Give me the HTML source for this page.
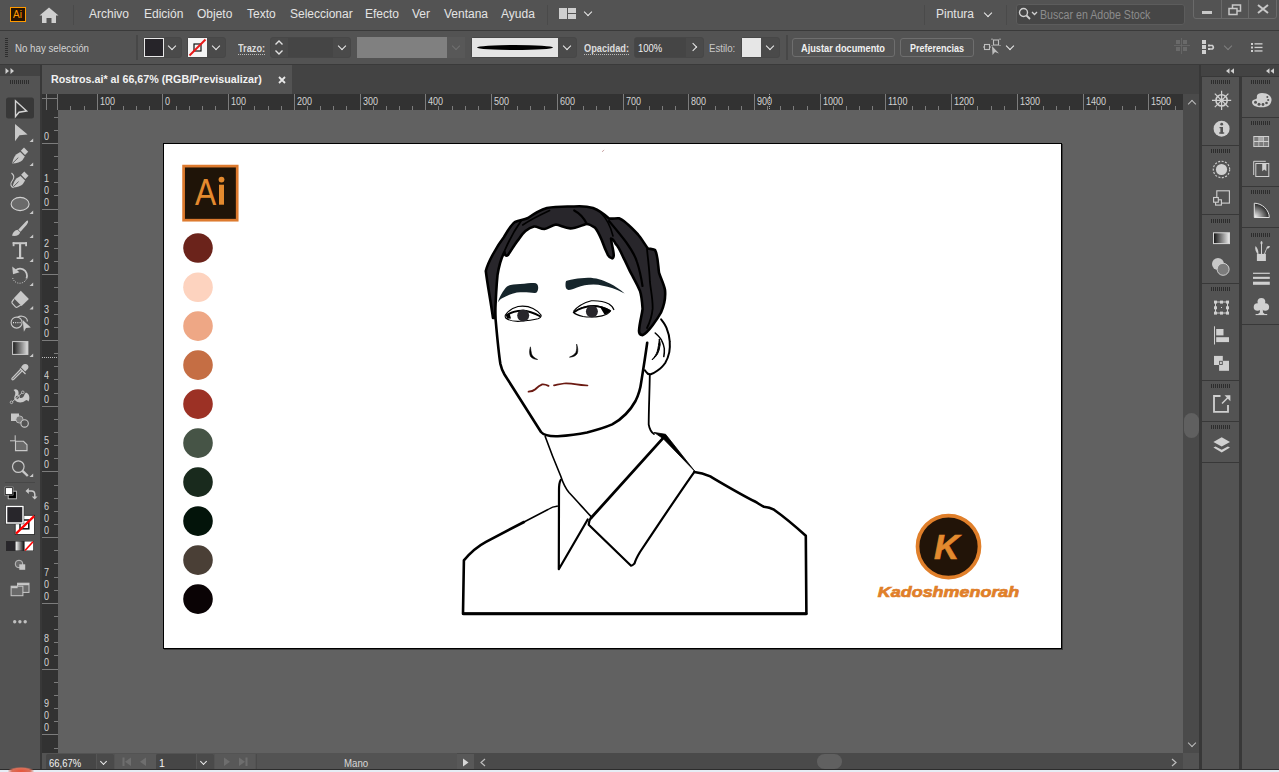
<!DOCTYPE html>
<html><head><meta charset="utf-8">
<style>
*{box-sizing:border-box;margin:0;padding:0}
html,body{width:1279px;height:772px;overflow:hidden;background:#383838;font-family:"Liberation Sans",sans-serif;color:#d8d8d8}
.a{position:absolute}
.menu{left:0;top:0;width:1279px;height:30px;background:#535353}
.mi{position:absolute;top:7px;font-size:12px;color:#e4e4e4;white-space:nowrap;line-height:14px}
.ctrl{left:0;top:31px;width:1279px;height:33px;background:#535353}
.t11{font-size:11px;line-height:13px;white-space:nowrap}
.dd{position:absolute;background:#4a4a4a;border:1px solid #474747;border-radius:3px}
.chev{position:absolute;width:6px;height:6px;border-right:1.9px solid #ececec;border-bottom:1.9px solid #ececec;transform:rotate(45deg)}
.sep{position:absolute;width:1px;background:#4a4a4a}
.btn{position:absolute;border:1px solid #6e6e6e;border-radius:3px;font-size:11px;font-weight:bold;color:#f0f0f0;text-align:center;line-height:17px;white-space:nowrap}
.rn{position:absolute;font-size:8px;line-height:8px;color:#d6d6d6;font-family:"Liberation Mono",monospace}
.rl{position:absolute;font-size:10.5px;line-height:9px;color:#d4d4d4;white-space:nowrap;transform:scaleX(0.86);transform-origin:0 0}
.grip{position:absolute;height:4px;background:repeating-linear-gradient(90deg,#2e2e2e 0 1px,transparent 1px 2px)}
</style></head><body>

<!-- MENU BAR -->
<div class="a menu"></div>
<div class="a" style="left:0;top:30px;width:1279px;height:1px;background:#3a3a3a"></div>
<!-- Ai logo -->
<div class="a" style="left:10px;top:7px;width:16px;height:15px;background:#261300;border:1.2px solid #ff9a00"></div>
<div class="a" style="left:12.5px;top:9px;font-size:10.5px;color:#ff9a00;line-height:11px;transform:scaleX(0.95);transform-origin:0 0">Ai</div>
<!-- home -->
<svg class="a" style="left:38px;top:6px" width="22" height="18" viewBox="0 0 22 18"><path d="M11 1.5 L1.5 9.5 L4 9.5 L4 17 L8.5 17 L8.5 12 L13.5 12 L13.5 17 L18 17 L18 9.5 L20.5 9.5 Z" fill="#cfcfcf"/></svg>
<div class="sep" style="left:73px;top:5px;height:20px"></div>
<div class="mi" style="left:89px">Archivo</div>
<div class="mi" style="left:144px">Edición</div>
<div class="mi" style="left:197px">Objeto</div>
<div class="mi" style="left:247px">Texto</div>
<div class="mi" style="left:290px">Seleccionar</div>
<div class="mi" style="left:365px">Efecto</div>
<div class="mi" style="left:412px">Ver</div>
<div class="mi" style="left:444px">Ventana</div>
<div class="mi" style="left:501px">Ayuda</div>
<div class="sep" style="left:547px;top:5px;height:20px"></div>
<!-- workspace icon -->
<div class="a" style="left:559px;top:8px;width:8px;height:11px;background:#cfcfcf"></div>
<div class="a" style="left:568px;top:8px;width:8px;height:5px;background:#cfcfcf"></div>
<div class="a" style="left:568px;top:14px;width:8px;height:5px;background:#cfcfcf"></div>
<div class="chev" style="left:585px;top:9px"></div>

<div class="sep" style="left:924px;top:5px;height:20px"></div>
<div class="mi" style="left:936px">Pintura</div>
<div class="chev" style="left:985px;top:10px"></div>
<div class="sep" style="left:1006px;top:5px;height:20px"></div>
<!-- search -->
<div class="a" style="left:1016px;top:4px;width:169px;height:21px;background:#464646;border:1px solid #5c5c5c;border-radius:3px"></div>
<svg class="a" style="left:1018px;top:7px" width="22" height="15" viewBox="0 0 22 15"><circle cx="5.5" cy="5.5" r="4" fill="none" stroke="#d0d0d0" stroke-width="1.4"/><path d="M8.5 8.5 L12 12" stroke="#d0d0d0" stroke-width="1.8"/><path d="M14 5 L16.5 7.5 L19 5" fill="none" stroke="#d0d0d0" stroke-width="1.3"/></svg>
<div class="mi" style="left:1040px;top:8px;color:#8c8c8c;transform:scaleX(0.885);transform-origin:0 0">Buscar en Adobe Stock</div>
<!-- window controls -->
<div class="a" style="left:1193px;top:-3px;width:84px;height:22px;border:1px solid #6a6a6a;border-radius:3px"></div>
<div class="a" style="left:1221px;top:0;width:1px;height:18px;background:#6a6a6a"></div>
<div class="a" style="left:1248px;top:0;width:1px;height:18px;background:#6a6a6a"></div>
<div class="a" style="left:1202px;top:11px;width:10px;height:3px;background:#c8c8c8"></div>
<svg class="a" style="left:1228px;top:4px" width="14" height="12" viewBox="0 0 14 12"><rect x="4.5" y="1" width="8" height="6" fill="none" stroke="#c8c8c8" stroke-width="1.5"/><rect x="1" y="4.5" width="8" height="6" fill="#535353" stroke="#c8c8c8" stroke-width="1.5"/></svg>
<svg class="a" style="left:1257px;top:4px" width="12" height="10" viewBox="0 0 12 10"><path d="M1 1 L11 9 M11 1 L1 9" stroke="#c8c8c8" stroke-width="2"/></svg>

<!-- CONTROL BAR -->
<div class="a ctrl"></div>
<div class="a" style="left:0;top:64px;width:1279px;height:1px;background:#3a3a3a"></div>
<div class="a" style="left:5px;top:38px;width:3px;height:19px;background:repeating-linear-gradient(180deg,#2e2e2e 0 1px,transparent 1px 2px)"></div>
<div class="a t11" style="left:15px;top:42px;color:#d4d4d4;font-size:10.5px;transform:scaleX(0.925);transform-origin:0 0">No hay selección</div>
<div class="sep" style="left:136px;top:35px;height:25px;background:#474747;width:2px"></div>
<!-- fill -->
<div class="dd" style="left:143px;top:37px;width:39px;height:21px"></div>
<div class="a" style="left:144px;top:38px;width:20px;height:19px;background:#262429;border:1px solid #e8e8e8"></div>
<div class="chev" style="left:169px;top:43px"></div>
<!-- stroke -->
<div class="dd" style="left:187px;top:37px;width:39px;height:21px"></div>
<svg class="a" style="left:188px;top:38px" width="19" height="19" viewBox="0 0 19 19"><rect width="19" height="19" fill="#f4f4f4"/><rect x="6" y="6" width="7" height="7" fill="none" stroke="#111" stroke-width="1.2"/><path d="M1.5 17.5 L17.5 1.5" stroke="#e81818" stroke-width="2"/></svg>
<div class="chev" style="left:213px;top:43px"></div>
<div class="a t11" style="left:238px;top:42px;font-weight:bold;color:#dcdcdc;font-size:10.5px;transform:scaleX(0.875);transform-origin:0 0">Trazo:</div>
<div class="a" style="left:238px;top:54px;width:27px;height:1px;background:repeating-linear-gradient(90deg,#bbb 0 1px,transparent 1px 2px)"></div>
<div class="dd" style="left:270px;top:37px;width:81px;height:21px"></div>
<div class="a" style="left:288px;top:38px;width:45px;height:19px;background:#454545"></div>
<svg class="a" style="left:274px;top:39px" width="10" height="17" viewBox="0 0 10 17"><path d="M1.5 5.5 L5 2 L8.5 5.5 M1.5 11.5 L5 15 L8.5 11.5" fill="none" stroke="#e0e0e0" stroke-width="1.4"/></svg>
<div class="chev" style="left:339px;top:43px"></div>
<!-- disabled -->
<div class="a" style="left:357px;top:37px;width:90px;height:21px;background:#808080"></div>
<div class="a" style="left:447px;top:37px;width:18px;height:21px;background:#585858"></div>
<div class="chev" style="left:453px;top:43px;border-color:#707070"></div>
<!-- profile -->
<div class="dd" style="left:471px;top:37px;width:106px;height:21px"></div>
<div class="a" style="left:472px;top:38px;width:86px;height:19px;background:#e4e4e4"></div>
<div class="a" style="left:477px;top:45px;width:76px;height:5px;background:#000;border-radius:50%"></div>
<div class="chev" style="left:564px;top:43px"></div>
<div class="a t11" style="left:584px;top:42px;font-weight:bold;color:#dcdcdc;font-size:10.5px;transform:scaleX(0.877);transform-origin:0 0">Opacidad:</div>
<div class="a" style="left:584px;top:54px;width:45px;height:1px;background:repeating-linear-gradient(90deg,#bbb 0 1px,transparent 1px 2px)"></div>
<div class="dd" style="left:634px;top:37px;width:70px;height:21px"></div>
<div class="a" style="left:635px;top:38px;width:51px;height:19px;background:#454545"></div>
<div class="a t11" style="left:638px;top:42px;color:#f0f0f0;font-size:10.5px;transform:scaleX(0.9);transform-origin:0 0">100%</div>
<div class="chev" style="left:690px;top:44px;transform:rotate(-45deg)"></div>
<div class="a t11" style="left:709px;top:42px;color:#c8c8c8;font-size:10.5px;transform:scaleX(0.92);transform-origin:0 0">Estilo:</div>
<div class="dd" style="left:741px;top:37px;width:39px;height:21px"></div>
<div class="a" style="left:742px;top:38px;width:19px;height:19px;background:#e6e6e6"></div>
<div class="chev" style="left:767px;top:43px"></div>
<div class="sep" style="left:786px;top:35px;height:25px;background:#474747;width:2px"></div>
<div class="btn" style="left:792px;top:38px;width:103px;height:19px"></div><div class="a t11" style="left:801px;top:42px;font-weight:bold;color:#f0f0f0;font-size:10.5px;transform:scaleX(0.878);transform-origin:0 0">Ajustar documento</div>
<div class="btn" style="left:900px;top:38px;width:74px;height:19px"></div><div class="a t11" style="left:910px;top:42px;font-weight:bold;color:#f0f0f0;font-size:10.5px;transform:scaleX(0.856);transform-origin:0 0">Preferencias</div>
<svg class="a" style="left:983px;top:38px" width="20" height="18" viewBox="0 0 20 18"><rect x="1.5" y="6.5" width="5" height="5" fill="none" stroke="#bdbdbd" stroke-width="1.1"/><path d="M0 9 H1.5 M6.5 9 H8" stroke="#bdbdbd" stroke-width="1"/><rect x="10.5" y="2" width="5" height="5" fill="none" stroke="#bdbdbd" stroke-width="1.1"/><path d="M9 0.5 V2 M17 0.5 V2 M9 7 V8 M17 7 V8" stroke="#bdbdbd" stroke-width="1"/><path d="M9 8 L9.5 17 L12 14 L16 15.5 Z" fill="#bdbdbd"/></svg>
<div class="chev" style="left:1007px;top:43px"></div>
<!-- right icons -->
<svg class="a" style="left:1174px;top:38px" width="16" height="16" viewBox="0 0 16 16"><g fill="#6a6a6a"><rect x="2" y="2" width="4" height="4"/><rect x="9" y="2" width="4" height="4"/><rect x="2" y="9" width="4" height="4"/><rect x="9" y="9" width="4" height="4"/></g><path d="M0 7.5 H16 M7.5 0 V16" stroke="#6a6a6a" stroke-width="0.8"/></svg>
<svg class="a" style="left:1201px;top:39px" width="16" height="16" viewBox="0 0 16 16"><g fill="#d0d0d0"><rect x="1" y="1" width="4" height="4"/><rect x="1" y="6" width="4" height="4"/><rect x="1" y="11" width="4" height="4"/><rect x="7" y="5.5" width="2" height="2"/><rect x="7" y="9" width="2" height="2"/></g><path d="M9 6.5 H11.5 A2.5 2.5 0 0 1 11.5 10 H9" fill="none" stroke="#d0d0d0" stroke-width="1.6"/></svg>
<div class="chev" style="left:1225px;top:43px;border-color:#808080"></div>
<svg class="a" style="left:1250px;top:42px" width="14" height="11" viewBox="0 0 14 11"><g fill="#d0d0d0"><rect x="1" y="1" width="2" height="2"/><rect x="1" y="4.5" width="2" height="2"/><rect x="1" y="8" width="2" height="2"/><rect x="4.5" y="1.2" width="8" height="1.3"/><rect x="4.5" y="4.8" width="8" height="1.3"/><rect x="4.5" y="8.3" width="8" height="1.3"/></g></svg>

<!-- LEFT TOOLBAR -->
<div class="a" style="left:0;top:65px;width:40px;height:705px;background:#535353"></div>
<div class="a" style="left:0;top:65px;width:40px;height:11px;background:#434343"></div>
<div class="a" style="left:40px;top:65px;width:2px;height:705px;background:#383838"></div>

<!-- TOOLBAR ICONS -->
<div class="a" style="left:10px;top:80px;width:19px;height:4px;background:repeating-linear-gradient(90deg,#2c2c2c 0 1px,transparent 1px 2px)"></div>
<svg class="a" style="left:4px;top:67px" width="12" height="8" viewBox="0 0 12 8"><path d="M1.5 1 L5 4 L1.5 7 Z M6.5 1 L10 4 L6.5 7 Z" fill="#cfcfcf"/></svg>
<svg class="a" style="left:0;top:0" width="42" height="772" viewBox="0 0 42 772">
<rect x="6" y="97.5" width="28" height="21" rx="2.5" fill="#383838"/>
<path d="M15.5 100.8 L15.5 116.5 L19 112.2 L26.6 111 Z" fill="none" stroke="#d4d4d4" stroke-width="1.4" stroke-linejoin="miter"/>
<path d="M15 124 L15 141.3 L19.5 135.3 L27.6 134.5 Z" fill="#c8c8c8"/>
<g fill="#c8c8c8">
<path d="M29.5 142 L33.2 138.6 L33.2 142 Z"/>
<path d="M29.5 166 L33.2 162.6 L33.2 166 Z"/>
<path d="M29.5 214 L33.2 210.6 L33.2 214 Z"/>
<path d="M29.5 238 L33.2 234.6 L33.2 238 Z"/>
<path d="M29.5 262 L33.2 258.6 L33.2 262 Z"/>
<path d="M29.5 286 L33.2 282.6 L33.2 286 Z"/>
<path d="M29.5 309.5 L33.2 306.1 L33.2 309.5 Z"/>
<path d="M29.5 357 L33.2 353.6 L33.2 357 Z"/>
<path d="M29.5 477 L33.2 473.6 L33.2 477 Z"/>
</g>
<!-- pen -->
<g fill="#c8c8c8">
<path d="M12.2 163.5 C13 159, 14.5 156, 16.5 154.3 L20.2 152 L24.8 156.5 L22.4 160.2 C20.5 162.2, 17 163.4, 12.2 163.5 Z"/>
<path d="M20.8 150.8 L24 147.6 L28.2 151.8 L25 155 Z"/>
<path d="M12.5 187.5 C13.3 183, 14.8 180, 16.8 178.3 L20.5 176 L25.1 180.5 L22.7 184.2 C20.8 186.2, 17.3 187.4, 12.5 187.5 Z"/>
<path d="M21.1 174.8 L24.3 171.6 L28.5 175.8 L25.3 179 Z"/>
</g>
<path d="M12.8 163 L18.3 157.6" stroke="#535353" stroke-width="0.9"/>
<path d="M13.1 187 L18.6 181.6" stroke="#535353" stroke-width="0.9"/>
<path d="M11.5 173 C14.5 175.5, 14.5 178.5, 11.8 181.5 C9.8 184, 11 187, 13.5 187.8" fill="none" stroke="#c8c8c8" stroke-width="1.1"/>
<!-- ellipse -->
<ellipse cx="20.1" cy="204" rx="9" ry="6.6" fill="#6a6a6a" stroke="#d0d0d0" stroke-width="1.1"/>
<!-- brush -->
<path d="M27.8 220.5 C28.5 221.5, 28 223, 26.5 225 L20.5 231.8 L18.2 229.8 L25 222.5 C26.3 221, 27.2 220.2, 27.8 220.5 Z" fill="#c8c8c8"/>
<path d="M12 235.8 C12.5 233, 14.3 230.3, 17.5 229.8 L20.2 232.3 C19.6 235.2, 16.5 236.3, 12 235.8 Z" fill="#c8c8c8"/>
<!-- type -->
<g fill="#c8c8c8"><rect x="12.7" y="242.2" width="14.3" height="2"/><rect x="12.7" y="242.2" width="1.8" height="4"/><rect x="25.2" y="242.2" width="1.8" height="4"/><rect x="19" y="243" width="2.2" height="15"/><rect x="16.6" y="257.2" width="7" height="1.8"/></g>
<!-- rotate -->
<path d="M15.5 270.5 C17.5 268.8, 20.5 268.3, 23 269.4 C26.5 271, 27.8 275, 26.5 278.5" fill="none" stroke="#c8c8c8" stroke-width="1.8"/>
<path d="M26.2 279.5 C24.5 282.5, 21 283.8, 17.8 283 C14.8 282.3, 12.8 279.8, 12.5 277" fill="none" stroke="#c8c8c8" stroke-width="1" stroke-dasharray="1 1.3"/>
<path d="M12.2 266.5 L13 274.2 L19.5 272.3 Z" fill="#c8c8c8"/>
<!-- eraser -->
<path d="M20.8 290.8 L28.9 298.9 L21.6 306 L13.8 298.2 Z" fill="#c8c8c8"/>
<path d="M14 298.8 L12 301.8 C11.8 302.5, 12 303.2, 12.5 303.7 L15.5 306.8 C16 307.3, 16.8 307.4, 17.5 307 L20.8 305" fill="none" stroke="#c8c8c8" stroke-width="1.2"/>
<!-- shape builder -->
<circle cx="16.6" cy="322.6" r="5.5" fill="none" stroke="#c8c8c8" stroke-width="1.1"/>
<path d="M17.5 317.2 C20 315.5, 24.5 315.8, 26.5 318.5 C27.2 319.5, 27.5 320.5, 27.3 321.5" fill="none" stroke="#c8c8c8" stroke-width="1.1"/>
<path d="M13 322.6 H21" stroke="#e0e0e0" stroke-width="1.1" stroke-dasharray="1 1.2"/>
<path d="M22.7 320 L23.9 331.8 L26 328 L30.8 327.6 Z" fill="#c8c8c8"/>
<!-- gradient -->
<defs><linearGradient id="g1" x1="0" x2="1" y1="0" y2="0"><stop offset="0" stop-color="#1a1a1a"/><stop offset="1" stop-color="#e0e0e0"/></linearGradient>
<linearGradient id="g2" x1="0" x2="1" y1="0" y2="0"><stop offset="0" stop-color="#ffffff"/><stop offset="1" stop-color="#111"/></linearGradient></defs>
<rect x="12.6" y="341.6" width="15.3" height="12.8" fill="url(#g1)" stroke="#cfcfcf" stroke-width="1"/>
<!-- eyedropper -->
<path d="M22.5 365.2 C24 363.5, 26.5 363.5, 27.8 365 C29 366.4, 28.6 368.6, 27 369.8 L25.2 371.5 L21 367.3 Z" fill="#c8c8c8"/>
<path d="M20 368.5 L25.5 374 M22 371 L13.5 379.5 C12.5 380.3, 11.5 379.5, 12 378.3 L20.5 369.5" fill="none" stroke="#c8c8c8" stroke-width="1.2"/>
<!-- puppet warp -->
<path d="M13.5 390 C15.5 388.5, 18 389.5, 18.5 392 C19 394.5, 17.5 396, 19.5 397.5 C21.5 399, 24 397, 24.5 394.5 C25 393, 26 392.5, 27 393 C29.5 394.5, 30 398.5, 28.5 401.5 C27.5 400, 26.5 399.5, 25.5 400.5 C23.5 402.5, 20 403, 17.5 402 C15 401, 13.5 399, 14.5 396.5 C15.5 394, 16 392, 13.5 390 Z" fill="#c8c8c8"/>
<circle cx="17.3" cy="397.3" r="2.1" fill="#535353" stroke="#c8c8c8" stroke-width="0.9"/>
<path d="M11.5 402.5 L23 392" stroke="#c8c8c8" stroke-width="0.9"/>
<circle cx="11.5" cy="402.3" r="1.3" fill="#535353" stroke="#c8c8c8" stroke-width="0.8"/>
<circle cx="22.8" cy="392.3" r="1.3" fill="#535353" stroke="#c8c8c8" stroke-width="0.8"/>
<!-- live paint shapes -->
<rect x="11" y="413.5" width="8" height="7.5" fill="#c8c8c8"/>
<circle cx="19.5" cy="419.5" r="3.6" fill="#7a7a7a" stroke="#c8c8c8" stroke-width="0.8"/>
<circle cx="24.6" cy="423.4" r="3.7" fill="#535353" stroke="#c8c8c8" stroke-width="1.1"/>
<!-- artboard -->
<path d="M15.2 435.3 V441 M10 440.8 H15.5" stroke="#c8c8c8" stroke-width="1"/>
<path d="M15.5 441.3 H23.5 L27 444.8 V450.6 H15.5 Z" fill="#6a6a6a" stroke="#c8c8c8" stroke-width="1.1"/>
<!-- zoom -->
<circle cx="18.3" cy="466.6" r="5.8" fill="none" stroke="#c8c8c8" stroke-width="1.2"/>
<path d="M22.5 470.8 L27.8 476" stroke="#c8c8c8" stroke-width="2.4"/>
<!-- separator -->
<rect x="5" y="482" width="30" height="1" fill="#474747"/>
<!-- default fill stroke -->
<rect x="8.2" y="491.2" width="8.2" height="7.6" fill="#000" stroke="#c8c8c8" stroke-width="0.9"/>
<rect x="5.3" y="487.6" width="7.4" height="7" fill="#fff" stroke="#000" stroke-width="0.9"/>
<path d="M4.8 487 H13.2 V495.2 H4.8 Z" fill="none" stroke="#c8c8c8" stroke-width="0.5"/>
<!-- swap -->
<path d="M27.5 491 H31.5 C33.5 491, 34.8 492.5, 34.8 494.5 V497" fill="none" stroke="#c8c8c8" stroke-width="1.5"/>
<path d="M25.5 491 L28.8 488 V494 Z M31.8 496.5 H37.6 L34.7 499.6 Z" fill="#c8c8c8"/>
<!-- stroke swatch -->
<rect x="15.2" y="515.3" width="19.4" height="19.1" fill="#fff" stroke="#222" stroke-width="0.8"/>
<rect x="20" y="520" width="8.8" height="8.8" fill="none" stroke="#111" stroke-width="1.5"/>
<path d="M16 533.6 L34.2 516.1" stroke="#ff0000" stroke-width="2.2"/>
<!-- fill swatch -->
<rect x="5.4" y="505.2" width="18.8" height="19" fill="#222" />
<rect x="6.6" y="506.4" width="16.4" height="16.6" fill="#28262b" stroke="#fff" stroke-width="1.4"/>
<!-- color modes -->
<rect x="6" y="541" width="27.8" height="10" fill="#2a2a2a"/>
<rect x="6.5" y="541.5" width="8.8" height="9" fill="#28262b"/>
<rect x="15.6" y="541.5" width="8.5" height="9" fill="url(#g2)"/>
<rect x="24.6" y="541.5" width="8.6" height="9" fill="#fff"/>
<path d="M25 550.5 L33 541.8" stroke="#ff0000" stroke-width="1.6"/>
<!-- draw mode -->
<circle cx="19" cy="564" r="3.8" fill="#6a6a6a" stroke="#c8c8c8" stroke-width="0.9"/>
<rect x="19.3" y="564.3" width="5.9" height="5.5" fill="#c8c8c8"/>
<!-- screen mode -->
<rect x="17.6" y="583.2" width="11.4" height="9.2" fill="#6a6a6a" stroke="#c8c8c8" stroke-width="1"/>
<rect x="17.6" y="583.2" width="11.4" height="2" fill="#c8c8c8"/>
<rect x="11.1" y="586.2" width="11.8" height="9.5" fill="#6a6a6a" stroke="#c8c8c8" stroke-width="1"/>
<rect x="11.1" y="586.2" width="6.5" height="2" fill="#c8c8c8"/>
<!-- more -->
<circle cx="14.7" cy="621.8" r="1.7" fill="#c0c0c0"/><circle cx="19.9" cy="621.8" r="1.7" fill="#c0c0c0"/><circle cx="25.2" cy="621.8" r="1.7" fill="#c0c0c0"/>
</svg>

<!-- TAB STRIP -->
<div class="a" style="left:42px;top:65px;width:1157px;height:29px;background:#434343"></div>
<div class="a" style="left:42px;top:65px;width:250px;height:29px;background:#535353"></div>
<div class="a" style="left:51px;top:73px;font-size:11px;font-weight:bold;color:#f2f2f2;white-space:nowrap;line-height:13px;transform:scaleX(0.974);transform-origin:0 0">Rostros.ai* al 66,67% (RGB/Previsualizar)</div>
<svg class="a" style="left:278px;top:76px" width="8" height="8" viewBox="0 0 8 8"><path d="M1 1 L7 7 M7 1 L1 7" stroke="#e8e8e8" stroke-width="1.8"/></svg>

<!-- RULERS -->
<div class="a" style="left:42px;top:94px;width:1141px;height:16px;background:#323232"></div>
<div class="a" style="left:42px;top:94px;width:16px;height:659px;background:#323232"></div>
<!--RULER-->
<div class="a" style="left:70px;top:106px;width:1px;height:4px;background:#7c7c7c"></div>
<div class="a" style="left:84px;top:106px;width:1px;height:4px;background:#7c7c7c"></div>
<div class="a" style="left:97px;top:94px;width:1px;height:16px;background:#7c7c7c"></div>
<div class="rl" style="left:100px;top:97px">100</div>
<div class="a" style="left:110px;top:106px;width:1px;height:4px;background:#7c7c7c"></div>
<div class="a" style="left:123px;top:106px;width:1px;height:4px;background:#7c7c7c"></div>
<div class="a" style="left:136px;top:106px;width:1px;height:4px;background:#7c7c7c"></div>
<div class="a" style="left:149px;top:106px;width:1px;height:4px;background:#7c7c7c"></div>
<div class="a" style="left:162px;top:94px;width:1px;height:16px;background:#7c7c7c"></div>
<div class="rl" style="left:165px;top:97px">0</div>
<div class="a" style="left:176px;top:106px;width:1px;height:4px;background:#7c7c7c"></div>
<div class="a" style="left:189px;top:106px;width:1px;height:4px;background:#7c7c7c"></div>
<div class="a" style="left:202px;top:106px;width:1px;height:4px;background:#7c7c7c"></div>
<div class="a" style="left:215px;top:106px;width:1px;height:4px;background:#7c7c7c"></div>
<div class="a" style="left:228px;top:94px;width:1px;height:16px;background:#7c7c7c"></div>
<div class="rl" style="left:231px;top:97px">100</div>
<div class="a" style="left:241px;top:106px;width:1px;height:4px;background:#7c7c7c"></div>
<div class="a" style="left:254px;top:106px;width:1px;height:4px;background:#7c7c7c"></div>
<div class="a" style="left:268px;top:106px;width:1px;height:4px;background:#7c7c7c"></div>
<div class="a" style="left:281px;top:106px;width:1px;height:4px;background:#7c7c7c"></div>
<div class="a" style="left:294px;top:94px;width:1px;height:16px;background:#7c7c7c"></div>
<div class="rl" style="left:297px;top:97px">200</div>
<div class="a" style="left:307px;top:106px;width:1px;height:4px;background:#7c7c7c"></div>
<div class="a" style="left:320px;top:106px;width:1px;height:4px;background:#7c7c7c"></div>
<div class="a" style="left:333px;top:106px;width:1px;height:4px;background:#7c7c7c"></div>
<div class="a" style="left:346px;top:106px;width:1px;height:4px;background:#7c7c7c"></div>
<div class="a" style="left:360px;top:94px;width:1px;height:16px;background:#7c7c7c"></div>
<div class="rl" style="left:363px;top:97px">300</div>
<div class="a" style="left:373px;top:106px;width:1px;height:4px;background:#7c7c7c"></div>
<div class="a" style="left:386px;top:106px;width:1px;height:4px;background:#7c7c7c"></div>
<div class="a" style="left:399px;top:106px;width:1px;height:4px;background:#7c7c7c"></div>
<div class="a" style="left:412px;top:106px;width:1px;height:4px;background:#7c7c7c"></div>
<div class="a" style="left:425px;top:94px;width:1px;height:16px;background:#7c7c7c"></div>
<div class="rl" style="left:428px;top:97px">400</div>
<div class="a" style="left:438px;top:106px;width:1px;height:4px;background:#7c7c7c"></div>
<div class="a" style="left:452px;top:106px;width:1px;height:4px;background:#7c7c7c"></div>
<div class="a" style="left:465px;top:106px;width:1px;height:4px;background:#7c7c7c"></div>
<div class="a" style="left:478px;top:106px;width:1px;height:4px;background:#7c7c7c"></div>
<div class="a" style="left:491px;top:94px;width:1px;height:16px;background:#7c7c7c"></div>
<div class="rl" style="left:494px;top:97px">500</div>
<div class="a" style="left:504px;top:106px;width:1px;height:4px;background:#7c7c7c"></div>
<div class="a" style="left:517px;top:106px;width:1px;height:4px;background:#7c7c7c"></div>
<div class="a" style="left:530px;top:106px;width:1px;height:4px;background:#7c7c7c"></div>
<div class="a" style="left:544px;top:106px;width:1px;height:4px;background:#7c7c7c"></div>
<div class="a" style="left:557px;top:94px;width:1px;height:16px;background:#7c7c7c"></div>
<div class="rl" style="left:560px;top:97px">600</div>
<div class="a" style="left:570px;top:106px;width:1px;height:4px;background:#7c7c7c"></div>
<div class="a" style="left:583px;top:106px;width:1px;height:4px;background:#7c7c7c"></div>
<div class="a" style="left:596px;top:106px;width:1px;height:4px;background:#7c7c7c"></div>
<div class="a" style="left:609px;top:106px;width:1px;height:4px;background:#7c7c7c"></div>
<div class="a" style="left:623px;top:94px;width:1px;height:16px;background:#7c7c7c"></div>
<div class="rl" style="left:626px;top:97px">700</div>
<div class="a" style="left:636px;top:106px;width:1px;height:4px;background:#7c7c7c"></div>
<div class="a" style="left:649px;top:106px;width:1px;height:4px;background:#7c7c7c"></div>
<div class="a" style="left:662px;top:106px;width:1px;height:4px;background:#7c7c7c"></div>
<div class="a" style="left:675px;top:106px;width:1px;height:4px;background:#7c7c7c"></div>
<div class="a" style="left:688px;top:94px;width:1px;height:16px;background:#7c7c7c"></div>
<div class="rl" style="left:691px;top:97px">800</div>
<div class="a" style="left:701px;top:106px;width:1px;height:4px;background:#7c7c7c"></div>
<div class="a" style="left:715px;top:106px;width:1px;height:4px;background:#7c7c7c"></div>
<div class="a" style="left:728px;top:106px;width:1px;height:4px;background:#7c7c7c"></div>
<div class="a" style="left:741px;top:106px;width:1px;height:4px;background:#7c7c7c"></div>
<div class="a" style="left:754px;top:94px;width:1px;height:16px;background:#7c7c7c"></div>
<div class="rl" style="left:757px;top:97px">900</div>
<div class="a" style="left:767px;top:106px;width:1px;height:4px;background:#7c7c7c"></div>
<div class="a" style="left:780px;top:106px;width:1px;height:4px;background:#7c7c7c"></div>
<div class="a" style="left:793px;top:106px;width:1px;height:4px;background:#7c7c7c"></div>
<div class="a" style="left:807px;top:106px;width:1px;height:4px;background:#7c7c7c"></div>
<div class="a" style="left:820px;top:94px;width:1px;height:16px;background:#7c7c7c"></div>
<div class="rl" style="left:823px;top:97px">1000</div>
<div class="a" style="left:833px;top:106px;width:1px;height:4px;background:#7c7c7c"></div>
<div class="a" style="left:846px;top:106px;width:1px;height:4px;background:#7c7c7c"></div>
<div class="a" style="left:859px;top:106px;width:1px;height:4px;background:#7c7c7c"></div>
<div class="a" style="left:872px;top:106px;width:1px;height:4px;background:#7c7c7c"></div>
<div class="a" style="left:885px;top:94px;width:1px;height:16px;background:#7c7c7c"></div>
<div class="rl" style="left:888px;top:97px">1100</div>
<div class="a" style="left:899px;top:106px;width:1px;height:4px;background:#7c7c7c"></div>
<div class="a" style="left:912px;top:106px;width:1px;height:4px;background:#7c7c7c"></div>
<div class="a" style="left:925px;top:106px;width:1px;height:4px;background:#7c7c7c"></div>
<div class="a" style="left:938px;top:106px;width:1px;height:4px;background:#7c7c7c"></div>
<div class="a" style="left:951px;top:94px;width:1px;height:16px;background:#7c7c7c"></div>
<div class="rl" style="left:954px;top:97px">1200</div>
<div class="a" style="left:964px;top:106px;width:1px;height:4px;background:#7c7c7c"></div>
<div class="a" style="left:977px;top:106px;width:1px;height:4px;background:#7c7c7c"></div>
<div class="a" style="left:991px;top:106px;width:1px;height:4px;background:#7c7c7c"></div>
<div class="a" style="left:1004px;top:106px;width:1px;height:4px;background:#7c7c7c"></div>
<div class="a" style="left:1017px;top:94px;width:1px;height:16px;background:#7c7c7c"></div>
<div class="rl" style="left:1020px;top:97px">1300</div>
<div class="a" style="left:1030px;top:106px;width:1px;height:4px;background:#7c7c7c"></div>
<div class="a" style="left:1043px;top:106px;width:1px;height:4px;background:#7c7c7c"></div>
<div class="a" style="left:1056px;top:106px;width:1px;height:4px;background:#7c7c7c"></div>
<div class="a" style="left:1069px;top:106px;width:1px;height:4px;background:#7c7c7c"></div>
<div class="a" style="left:1083px;top:94px;width:1px;height:16px;background:#7c7c7c"></div>
<div class="rl" style="left:1086px;top:97px">1400</div>
<div class="a" style="left:1096px;top:106px;width:1px;height:4px;background:#7c7c7c"></div>
<div class="a" style="left:1109px;top:106px;width:1px;height:4px;background:#7c7c7c"></div>
<div class="a" style="left:1122px;top:106px;width:1px;height:4px;background:#7c7c7c"></div>
<div class="a" style="left:1135px;top:106px;width:1px;height:4px;background:#7c7c7c"></div>
<div class="a" style="left:1148px;top:94px;width:1px;height:16px;background:#7c7c7c"></div>
<div class="rl" style="left:1151px;top:97px">1500</div>
<div class="a" style="left:1161px;top:106px;width:1px;height:4px;background:#7c7c7c"></div>
<div class="a" style="left:1175px;top:106px;width:1px;height:4px;background:#7c7c7c"></div>
<div class="a" style="left:54px;top:117px;width:4px;height:1px;background:#7c7c7c"></div>
<div class="a" style="left:54px;top:130px;width:4px;height:1px;background:#7c7c7c"></div>
<div class="a" style="left:42px;top:143px;width:16px;height:1px;background:#7c7c7c"></div>
<div class="rl" style="left:44px;top:132px">0</div>
<div class="a" style="left:54px;top:156px;width:4px;height:1px;background:#7c7c7c"></div>
<div class="a" style="left:54px;top:169px;width:4px;height:1px;background:#7c7c7c"></div>
<div class="a" style="left:54px;top:182px;width:4px;height:1px;background:#7c7c7c"></div>
<div class="a" style="left:54px;top:195px;width:4px;height:1px;background:#7c7c7c"></div>
<div class="a" style="left:42px;top:209px;width:16px;height:1px;background:#7c7c7c"></div>
<div class="rl" style="left:44px;top:174px">1</div>
<div class="rl" style="left:44px;top:186px">0</div>
<div class="rl" style="left:44px;top:198px">0</div>
<div class="a" style="left:54px;top:222px;width:4px;height:1px;background:#7c7c7c"></div>
<div class="a" style="left:54px;top:235px;width:4px;height:1px;background:#7c7c7c"></div>
<div class="a" style="left:54px;top:248px;width:4px;height:1px;background:#7c7c7c"></div>
<div class="a" style="left:54px;top:261px;width:4px;height:1px;background:#7c7c7c"></div>
<div class="a" style="left:42px;top:274px;width:16px;height:1px;background:#7c7c7c"></div>
<div class="rl" style="left:44px;top:239px">2</div>
<div class="rl" style="left:44px;top:251px">0</div>
<div class="rl" style="left:44px;top:263px">0</div>
<div class="a" style="left:54px;top:287px;width:4px;height:1px;background:#7c7c7c"></div>
<div class="a" style="left:54px;top:301px;width:4px;height:1px;background:#7c7c7c"></div>
<div class="a" style="left:54px;top:314px;width:4px;height:1px;background:#7c7c7c"></div>
<div class="a" style="left:54px;top:327px;width:4px;height:1px;background:#7c7c7c"></div>
<div class="a" style="left:42px;top:340px;width:16px;height:1px;background:#7c7c7c"></div>
<div class="rl" style="left:44px;top:305px">3</div>
<div class="rl" style="left:44px;top:317px">0</div>
<div class="rl" style="left:44px;top:329px">0</div>
<div class="a" style="left:54px;top:353px;width:4px;height:1px;background:#7c7c7c"></div>
<div class="a" style="left:54px;top:366px;width:4px;height:1px;background:#7c7c7c"></div>
<div class="a" style="left:54px;top:379px;width:4px;height:1px;background:#7c7c7c"></div>
<div class="a" style="left:54px;top:393px;width:4px;height:1px;background:#7c7c7c"></div>
<div class="a" style="left:42px;top:406px;width:16px;height:1px;background:#7c7c7c"></div>
<div class="rl" style="left:44px;top:371px">4</div>
<div class="rl" style="left:44px;top:383px">0</div>
<div class="rl" style="left:44px;top:395px">0</div>
<div class="a" style="left:54px;top:419px;width:4px;height:1px;background:#7c7c7c"></div>
<div class="a" style="left:54px;top:432px;width:4px;height:1px;background:#7c7c7c"></div>
<div class="a" style="left:54px;top:445px;width:4px;height:1px;background:#7c7c7c"></div>
<div class="a" style="left:54px;top:458px;width:4px;height:1px;background:#7c7c7c"></div>
<div class="a" style="left:42px;top:471px;width:16px;height:1px;background:#7c7c7c"></div>
<div class="rl" style="left:44px;top:436px">5</div>
<div class="rl" style="left:44px;top:448px">0</div>
<div class="rl" style="left:44px;top:460px">0</div>
<div class="a" style="left:54px;top:485px;width:4px;height:1px;background:#7c7c7c"></div>
<div class="a" style="left:54px;top:498px;width:4px;height:1px;background:#7c7c7c"></div>
<div class="a" style="left:54px;top:511px;width:4px;height:1px;background:#7c7c7c"></div>
<div class="a" style="left:54px;top:524px;width:4px;height:1px;background:#7c7c7c"></div>
<div class="a" style="left:42px;top:537px;width:16px;height:1px;background:#7c7c7c"></div>
<div class="rl" style="left:44px;top:502px">6</div>
<div class="rl" style="left:44px;top:514px">0</div>
<div class="rl" style="left:44px;top:526px">0</div>
<div class="a" style="left:54px;top:550px;width:4px;height:1px;background:#7c7c7c"></div>
<div class="a" style="left:54px;top:563px;width:4px;height:1px;background:#7c7c7c"></div>
<div class="a" style="left:54px;top:577px;width:4px;height:1px;background:#7c7c7c"></div>
<div class="a" style="left:54px;top:590px;width:4px;height:1px;background:#7c7c7c"></div>
<div class="a" style="left:42px;top:603px;width:16px;height:1px;background:#7c7c7c"></div>
<div class="rl" style="left:44px;top:568px">7</div>
<div class="rl" style="left:44px;top:580px">0</div>
<div class="rl" style="left:44px;top:592px">0</div>
<div class="a" style="left:54px;top:616px;width:4px;height:1px;background:#7c7c7c"></div>
<div class="a" style="left:54px;top:629px;width:4px;height:1px;background:#7c7c7c"></div>
<div class="a" style="left:54px;top:642px;width:4px;height:1px;background:#7c7c7c"></div>
<div class="a" style="left:54px;top:655px;width:4px;height:1px;background:#7c7c7c"></div>
<div class="a" style="left:42px;top:669px;width:16px;height:1px;background:#7c7c7c"></div>
<div class="rl" style="left:44px;top:634px">8</div>
<div class="rl" style="left:44px;top:646px">0</div>
<div class="rl" style="left:44px;top:658px">0</div>
<div class="a" style="left:54px;top:682px;width:4px;height:1px;background:#7c7c7c"></div>
<div class="a" style="left:54px;top:695px;width:4px;height:1px;background:#7c7c7c"></div>
<div class="a" style="left:54px;top:708px;width:4px;height:1px;background:#7c7c7c"></div>
<div class="a" style="left:54px;top:721px;width:4px;height:1px;background:#7c7c7c"></div>
<div class="a" style="left:42px;top:734px;width:16px;height:1px;background:#7c7c7c"></div>
<div class="rl" style="left:44px;top:699px">9</div>
<div class="rl" style="left:44px;top:711px">0</div>
<div class="rl" style="left:44px;top:723px">0</div>
<div class="a" style="left:54px;top:748px;width:4px;height:1px;background:#7c7c7c"></div>
<!--/RULER-->
<div class="a" style="left:42px;top:357px;width:16px;height:1px;background:repeating-linear-gradient(90deg,#bdbdbd 0 1px,transparent 1px 2px)"></div>
<div class="a" style="left:769px;top:94px;width:1px;height:16px;background:repeating-linear-gradient(180deg,#a8a8a8 0 1px,transparent 1px 2px)"></div>
<div class="a" style="left:42px;top:98px;width:16px;height:1px;background:#7c7c7c"></div>
<div class="a" style="left:46px;top:94px;width:1px;height:16px;background:#7c7c7c"></div>
<div class="a" style="left:57px;top:94px;width:1px;height:16px;background:#7c7c7c"></div>

<!-- CANVAS -->
<div class="a" style="left:58px;top:110px;width:1125px;height:643px;background:#616161"></div>
<!-- vertical scrollbar -->
<div class="a" style="left:1183px;top:94px;width:16px;height:659px;background:#4a4a4a"></div>
<div class="chev" style="left:1189px;top:101px;transform:rotate(-135deg);border-color:#bdbdbd"></div>
<div class="a" style="left:1184px;top:413px;width:15px;height:25px;background:#606060;border-radius:8px"></div>
<div class="chev" style="left:1189px;top:740px;border-color:#bdbdbd"></div>

<!-- RIGHT PANELS -->
<div class="a" style="left:1199px;top:65px;width:80px;height:705px;background:#383838"></div>
<div class="a" style="left:1201px;top:65px;width:78px;height:11px;background:#434343"></div>
<svg class="a" style="left:1225px;top:68px" width="10" height="6" viewBox="0 0 10 6"><path d="M4.5 0.3 L1 3 L4.5 5.7 Z M9 0.3 L5.5 3 L9 5.7 Z" fill="#cfcfcf"/></svg>
<svg class="a" style="left:1265px;top:68px" width="10" height="6" viewBox="0 0 10 6"><path d="M4.5 0.3 L1 3 L4.5 5.7 Z M9 0.3 L5.5 3 L9 5.7 Z" fill="#cfcfcf"/></svg>
<div class="a" style="left:1202px;top:77px;width:37px;height:68px;background:#535353"></div>
<div class="a" style="left:1202px;top:146px;width:37px;height:68px;background:#535353"></div>
<div class="a" style="left:1202px;top:215px;width:37px;height:68px;background:#535353"></div>
<div class="a" style="left:1202px;top:284px;width:37px;height:96px;background:#535353"></div>
<div class="a" style="left:1202px;top:381px;width:37px;height:40px;background:#535353"></div>
<div class="a" style="left:1202px;top:422px;width:37px;height:40px;background:#535353"></div>
<div class="a" style="left:1202px;top:463px;width:37px;height:306px;background:#535353"></div>
<div class="a" style="left:1242px;top:77px;width:37px;height:40px;background:#535353"></div>
<div class="a" style="left:1242px;top:118px;width:37px;height:68px;background:#535353"></div>
<div class="a" style="left:1242px;top:187px;width:37px;height:40px;background:#535353"></div>
<div class="a" style="left:1242px;top:228px;width:37px;height:96px;background:#535353"></div>
<div class="a" style="left:1242px;top:325px;width:37px;height:444px;background:#535353"></div>
<div class="a" style="left:1211px;top:80px;width:19px;height:4px;background:repeating-linear-gradient(90deg,#2c2c2c 0 1px,transparent 1px 2px)"></div>
<div class="a" style="left:1211px;top:149px;width:19px;height:4px;background:repeating-linear-gradient(90deg,#2c2c2c 0 1px,transparent 1px 2px)"></div>
<div class="a" style="left:1211px;top:219px;width:19px;height:4px;background:repeating-linear-gradient(90deg,#2c2c2c 0 1px,transparent 1px 2px)"></div>
<div class="a" style="left:1211px;top:287px;width:19px;height:4px;background:repeating-linear-gradient(90deg,#2c2c2c 0 1px,transparent 1px 2px)"></div>
<div class="a" style="left:1211px;top:384px;width:19px;height:4px;background:repeating-linear-gradient(90deg,#2c2c2c 0 1px,transparent 1px 2px)"></div>
<div class="a" style="left:1211px;top:425px;width:19px;height:4px;background:repeating-linear-gradient(90deg,#2c2c2c 0 1px,transparent 1px 2px)"></div>
<div class="a" style="left:1251px;top:80px;width:19px;height:4px;background:repeating-linear-gradient(90deg,#2c2c2c 0 1px,transparent 1px 2px)"></div>
<div class="a" style="left:1251px;top:121px;width:19px;height:4px;background:repeating-linear-gradient(90deg,#2c2c2c 0 1px,transparent 1px 2px)"></div>
<div class="a" style="left:1251px;top:190px;width:19px;height:4px;background:repeating-linear-gradient(90deg,#2c2c2c 0 1px,transparent 1px 2px)"></div>
<div class="a" style="left:1251px;top:233px;width:19px;height:4px;background:repeating-linear-gradient(90deg,#2c2c2c 0 1px,transparent 1px 2px)"></div>
<svg class="a" style="left:1199px;top:60px" width="80" height="420" viewBox="1199 60 80 420">
<defs><linearGradient id="pg" x1="0" x2="1"><stop offset="0" stop-color="#111"/><stop offset="1" stop-color="#eee"/></linearGradient>
<radialGradient id="qg" cx="0" cy="1" r="1"><stop offset="0" stop-color="#fff"/><stop offset="1" stop-color="#222"/></radialGradient></defs>
<g fill="none" stroke="#d0d0d0">
<!-- helm -->
<circle cx="1221.6" cy="100.4" r="5.6" stroke-width="1.6"/>
<circle cx="1221.6" cy="100.4" r="1.6" stroke-width="1"/>
<path d="M1221.6 90.8 V110 M1212 100.4 H1231.2 M1214.8 93.6 L1228.4 107.2 M1228.4 93.6 L1214.8 107.2" stroke-width="1.2"/>
</g>
<circle cx="1221.6" cy="128.7" r="8" fill="#d0d0d0"/>
<rect x="1220.4" y="127" width="2.6" height="6.5" fill="#535353"/><rect x="1219.2" y="132.3" width="5" height="1.4" fill="#535353"/><rect x="1219.5" y="127" width="2" height="1.2" fill="#535353"/>
<circle cx="1221.7" cy="124.2" r="1.4" fill="#535353"/>
<!-- dashed circle -->
<circle cx="1221.5" cy="169.5" r="5.6" fill="#d0d0d0"/>
<circle cx="1221.5" cy="169.5" r="8.2" fill="none" stroke="#d0d0d0" stroke-width="1.1" stroke-dasharray="2 1.5"/>
<!-- transform -->
<rect x="1216.8" y="190.8" width="12.6" height="12.3" fill="none" stroke="#d0d0d0" stroke-width="1.1"/>
<rect x="1215.6" y="199.8" width="5.8" height="5.3" fill="#535353" stroke="#d0d0d0" stroke-width="1.1"/>
<rect x="1213.6" y="197.5" width="4.7" height="4.7" fill="#535353" stroke="#d0d0d0" stroke-width="1.1"/>
<!-- gradient -->
<rect x="1213.5" y="232.8" width="16" height="10.8" fill="url(#pg)" stroke="#d8d8d8" stroke-width="1"/>
<!-- transparency -->
<circle cx="1218" cy="264.1" r="6" fill="#c8c8c8"/>
<circle cx="1223.1" cy="269.3" r="6" fill="#7c7c7c" stroke="#d0d0d0" stroke-width="1"/>
<!-- artboards -->
<rect x="1215.5" y="302" width="12" height="11" fill="none" stroke="#d0d0d0" stroke-width="1"/>
<g fill="#d0d0d0"><rect x="1214" y="300.6" width="3" height="3"/><rect x="1220" y="300.6" width="3" height="3"/><rect x="1226" y="300.6" width="3" height="3"/><rect x="1214" y="306.3" width="3" height="3"/><rect x="1226" y="306.3" width="3" height="3"/><rect x="1214" y="311.6" width="3" height="3"/><rect x="1220" y="311.6" width="3" height="3"/><rect x="1226" y="311.6" width="3" height="3"/><rect x="1221" y="307" width="1" height="1"/></g>
<!-- align -->
<g fill="#d0d0d0"><rect x="1214" y="326.3" width="1" height="18.2"/><rect x="1216.2" y="329" width="7.3" height="6.4"/><rect x="1216.2" y="337.2" width="12.8" height="4.9"/></g>
<!-- pathfinder -->
<rect x="1214" y="355.9" width="8.8" height="9.1" fill="#d0d0d0"/>
<rect x="1219.1" y="360.8" width="9.9" height="10" fill="#d0d0d0"/>
<rect x="1219.6" y="361.3" width="2.7" height="3.2" fill="none" stroke="#535353" stroke-width="0.9"/>
<!-- export -->
<path d="M1220.5 396 H1214 V411.8 H1228 V405" fill="none" stroke="#d0d0d0" stroke-width="1.8"/>
<path d="M1222 403.5 L1229.5 396" stroke="#d0d0d0" stroke-width="1.5"/>
<path d="M1224.5 395.3 H1230.4 V401.2 Z" fill="#d0d0d0"/>
<!-- layers -->
<path d="M1221.7 437.3 L1230 442 L1221.7 446.6 L1213.4 442 Z" fill="#d0d0d0"/>
<path d="M1215.5 446.5 L1213.4 447.6 L1221.7 452.6 L1230 447.6 L1227.9 446.5 L1221.7 449.8 Z" fill="#d0d0d0"/>
<!-- palette -->
<path d="M1262 93 C1268 93, 1272 96.5, 1271.5 100.5 C1271 104.5, 1268 107.3, 1262 107.3 C1256 107.3, 1252 105.5, 1252 102 C1252 100, 1254 99.5, 1256 99 C1257.5 98.5, 1256.5 97, 1257 95.5 C1257.5 94, 1259 93, 1262 93 Z" fill="#d0d0d0"/>
<g fill="#535353"><circle cx="1255.5" cy="102.3" r="1.5"/><circle cx="1259" cy="104.3" r="1.5"/><circle cx="1263" cy="104.5" r="1.4"/><circle cx="1266.5" cy="103" r="1.3"/><circle cx="1268.2" cy="100" r="1.1"/><circle cx="1267.3" cy="97" r="1"/></g>
<!-- swatches -->
<rect x="1253.3" y="136" width="15.8" height="11" fill="#d0d0d0"/>
<g fill="#7c7c7c"><rect x="1254.3" y="137" width="4.2" height="4"/><rect x="1264" y="137" width="4.2" height="4"/><rect x="1254.3" y="142" width="4.2" height="4.1"/><rect x="1259.2" y="142" width="4.2" height="4.1"/><rect x="1264" y="142" width="4.2" height="4.1"/></g>
<rect x="1259.2" y="137" width="4.2" height="4" fill="#a8a8a8"/>
<!-- symbols book -->
<path d="M1253.7 175 V161.3 H1265.8" fill="none" stroke="#d0d0d0" stroke-width="1"/>
<rect x="1255.8" y="163.5" width="13" height="13" fill="none" stroke="#d0d0d0" stroke-width="1"/>
<path d="M1262.2 163.5 H1266.4 V171.2 L1264.3 169.5 L1262.2 171.2 Z" fill="#d0d0d0"/>
<!-- quarter -->
<path d="M1254.3 217.5 V203.2 C1262 203.2, 1269.3 210, 1269.3 217.5 Z" fill="url(#qg)" stroke="#e0e0e0" stroke-width="1"/>
<!-- brushes -->
<rect x="1256.9" y="253.9" width="9" height="7.1" fill="#d0d0d0"/>
<path d="M1257.5 254 C1256 252, 1254.5 249, 1255.5 246 C1257 247.5, 1258.5 250, 1258.5 254 Z" fill="#d0d0d0"/>
<path d="M1261 254 V244.5 C1260 243.5, 1260.5 241.5, 1261.5 241 C1262.5 241.5, 1263 243.5, 1262 244.5 V254 Z" fill="#d0d0d0"/>
<path d="M1264 254 L1266.5 248 C1266.5 246.5, 1268.5 245.5, 1270 246.5 C1269.5 248, 1268 249, 1267 248.5 L1265 254 Z" fill="#d0d0d0"/>
<!-- stroke -->
<g fill="#d0d0d0"><rect x="1253" y="272.7" width="16.8" height="1.2"/><rect x="1253" y="276.8" width="16.8" height="2.1"/><rect x="1253" y="281.7" width="16.8" height="3.1"/></g>
<!-- club -->
<g fill="#d0d0d0"><circle cx="1261.4" cy="301.8" r="3.9"/><circle cx="1257.5" cy="307" r="3.8"/><circle cx="1265.3" cy="307" r="3.8"/><path d="M1260.3 305 H1262.5 L1263 312.5 L1265 314.2 H1257.7 L1259.8 312.5 Z"/><rect x="1255.6" y="314" width="11.6" height="1.1"/></g>
</svg>

<!-- STATUS BAR -->
<div class="a" style="left:42px;top:753px;width:1157px;height:16px;background:#4a4a4a"></div>
<div class="a" style="left:42px;top:753px;width:415px;height:16px;background:#535353"></div>
<div class="a" style="left:46px;top:754px;width:50px;height:15px;background:#464646;border-radius:2px 0 0 0"></div>
<div class="a" style="left:96px;top:754px;width:1px;height:15px;background:#555"></div>
<div class="a" style="left:97px;top:754px;width:17px;height:15px;background:#4a4a4a;border-radius:0 2px 0 0"></div>
<div class="a t11" style="left:49px;top:757px;color:#f4f4f4;font-size:10.5px;transform:scaleX(0.9);transform-origin:0 0">66,67%</div>
<div class="chev" style="left:101px;top:759px;width:5px;height:5px"></div>
<div class="a" style="left:115px;top:754px;width:41px;height:15px;background:#585858"></div>
<svg class="a" style="left:122px;top:757px" width="26" height="10" viewBox="0 0 26 10"><rect x="0.5" y="0.5" width="2" height="8.5" fill="#6e6e6e"/><path d="M9 0.5 L3 4.75 L9 9 Z M24 0.5 L18 4.75 L24 9 Z" fill="#6e6e6e"/></svg>
<div class="a" style="left:156px;top:754px;width:40px;height:15px;background:#464646;border-radius:2px 0 0 0"></div>
<div class="a t11" style="left:159px;top:757px;color:#f4f4f4;font-size:10.5px">1</div>
<div class="a" style="left:196px;top:754px;width:1px;height:15px;background:#555"></div>
<div class="a" style="left:197px;top:754px;width:17px;height:15px;background:#4a4a4a;border-radius:0 2px 0 0"></div>
<div class="chev" style="left:201px;top:759px;width:5px;height:5px"></div>
<div class="a" style="left:215px;top:754px;width:40px;height:15px;background:#585858"></div>
<svg class="a" style="left:223px;top:757px" width="26" height="10" viewBox="0 0 26 10"><path d="M1 0.5 L7 4.75 L1 9 Z M16 0.5 L22 4.75 L16 9 Z" fill="#6e6e6e"/><rect x="22.5" y="0.5" width="2" height="8.5" fill="#6e6e6e"/></svg>
<div class="a" style="left:256px;top:754px;width:1px;height:15px;background:#4a4a4a"></div>
<div class="a t11" style="left:344px;top:757px;color:#d8d8d8;font-size:10.5px;transform:scaleX(0.92);transform-origin:0 0">Mano</div>
<div class="a" style="left:457px;top:754px;width:17px;height:15px;background:#585858"></div>
<svg class="a" style="left:462px;top:758px" width="8" height="9" viewBox="0 0 8 9"><path d="M1 0.5 L6.5 4.5 L1 8.5 Z" fill="#d8d8d8"/></svg>
<svg class="a" style="left:479px;top:758px" width="8" height="9" viewBox="0 0 8 9"><path d="M6 1 L2 4.5 L6 8" fill="none" stroke="#bdbdbd" stroke-width="1.2"/></svg>
<div class="a" style="left:817px;top:754px;width:25px;height:15px;background:#606060;border-radius:8px"></div>
<svg class="a" style="left:1170px;top:758px" width="8" height="9" viewBox="0 0 8 9"><path d="M2 1 L6 4.5 L2 8" fill="none" stroke="#bdbdbd" stroke-width="1.2"/></svg>
<div class="a" style="left:1183px;top:753px;width:16px;height:16px;background:#535353"></div>
<div class="a" style="left:0;top:769px;width:1279px;height:1px;background:#2c2c2c"></div>
<div class="a" style="left:0;top:770px;width:1279px;height:2px;background:#e6edf5"></div>
<div class="a" style="left:8px;top:767px;width:26px;height:8px;border-radius:50%;background:radial-gradient(ellipse at center,#e8553a 0,#d9705a 50%,rgba(200,120,100,0) 75%)"></div>

<!-- ARTBOARD -->
<div class="a" style="left:163px;top:143px;width:899px;height:506px;background:#fff;border:1px solid #000;box-shadow:1px 1px 0 #3a3a3a"></div>

<!-- ARTWORK -->
<svg class="a" style="left:0;top:0" width="1279" height="772" viewBox="0 0 1279 772">
<!-- Ai logo -->
<rect x="183.6" y="166.1" width="53.6" height="54.1" fill="#1f1408" stroke="#dd7a2e" stroke-width="2.7"/>
<text x="195" y="204.7" font-family="Liberation Sans" font-size="37" fill="#e48a2e" transform="translate(195 0) scale(0.86 1) translate(-195 0)">A</text>
<rect x="219" y="184.7" width="5" height="20" fill="#e48a2e"/>
<circle cx="221.5" cy="179.6" r="2.9" fill="#e48a2e"/>
<!-- swatches -->
<g>
<circle cx="198" cy="248" r="14.8" fill="#6b231b"/>
<circle cx="198" cy="287.2" r="14.8" fill="#fdd3bf"/>
<circle cx="198" cy="326.1" r="14.8" fill="#eea785"/>
<circle cx="198" cy="365.1" r="14.8" fill="#c56e44"/>
<circle cx="198" cy="404.1" r="14.8" fill="#9c3125"/>
<circle cx="198" cy="443.1" r="14.8" fill="#465446"/>
<circle cx="198" cy="482.1" r="14.8" fill="#192a1d"/>
<circle cx="198" cy="521.1" r="14.8" fill="#03140a"/>
<circle cx="198" cy="560.1" r="14.8" fill="#4a3f36"/>
<circle cx="198" cy="599.1" r="14.8" fill="#0a0305"/>
</g>
<!-- logo K -->
<circle cx="948.5" cy="546.6" r="31" fill="#221408" stroke="#e07f2a" stroke-width="3.7"/>
<text x="934" y="559" font-family="Liberation Sans" font-weight="bold" font-style="italic" font-size="35" fill="#e48a2e" stroke="#e48a2e" stroke-width="0.6">K</text>
<text x="877.8" y="596.8" font-family="Liberation Sans" font-weight="bold" font-style="italic" font-size="14.6" fill="#e07f2a" stroke="#e07f2a" stroke-width="0.7" textLength="141.5" lengthAdjust="spacingAndGlyphs">Kadoshmenorah</text>

<path d="M602 151.8 L604.2 150" stroke="#c49a9a" stroke-width="0.9"/>
<!-- FACE -->
<g fill="none" stroke="#000" stroke-linecap="round" stroke-linejoin="round">
<!-- face left edge + jaw -->
<path d="M491.9 270.9 C493.5 290, 494.5 305, 495.6 319.4 C497 335, 498.5 352, 500.4 364 C501.5 369, 503 372, 504.5 374.5 L541 432 C544 435.5, 549 436.5, 557.8 436.2 C570 435.5, 580 434, 587 432.5 C597 430, 605 427.5, 612.2 424.4 C622 419, 630 411, 635.5 401 C639 394, 640.5 388, 641.3 381.6 C643.5 368, 645.5 355, 647.2 342.8" stroke-width="2.6"/>
<!-- neck left -->
<path d="M545.2 436.6 C550 450, 556 465, 560.7 476 C563 483, 566 489, 569 492.5 C577 501, 584 509, 591.8 517.4" stroke-width="1.6"/>
<!-- neck right -->
<path d="M649.8 375 C649.5 395, 648.7 410, 648.7 424.5 C649.5 429, 651.5 432.5, 654 434" stroke-width="1.8"/>
<!-- ear -->
<path d="M661.1 319.4 C664 323, 666 326, 667 329.4 C668.5 333, 669.5 337, 669.7 341.2 C670 345, 669.8 349, 669.3 352.1 C668.5 356, 667 360, 665.2 363 C663 366, 661 368.5, 658 370.2 C655.5 372, 653 373.5, 650.7 374.3 C648.5 374.5, 647 373.5, 646.2 372 L644.8 370.2" stroke-width="2"/>
<path d="M655.2 333 C658 335.5, 660.5 338, 661.6 340.3 C663 343, 664 346, 664.3 348.5 C664.5 351.5, 664.3 354, 663.8 356.6" stroke-width="1.5"/>
<path d="M659.3 339.4 C660.2 342, 660.5 344.5, 659.8 346.6 C659.5 349.5, 658.7 351.5, 657.5 353.9 C656 356.5, 654 358.5, 652 359.8 C654.5 357, 656.2 354.5, 657.2 351.5 C658.2 348, 658.8 343.5, 659.3 339.4 Z" fill="#000" stroke-width="1"/>
<!-- collar big flap -->
<path d="M664.4 436.6 L591.2 517.8" stroke-width="2.8"/>
<path d="M694.4 471.8 C680 492, 660 522, 640 552 C637 557, 635.5 560, 634.5 563.5 C633 565, 631.5 566, 630.8 565.5 L588.7 524.7 C589 521, 590 519, 591.2 517.8" stroke-width="2.2"/>
<path d="M654.5 432.5 L665.6 434.3 L695 471.5 L663.5 439 Z" fill="#000" stroke-width="0.8"/>
<!-- left collar flap -->
<path d="M560.7 480 C559.5 482, 559 486, 559 490 L558.8 569.2 L587.7 519.5" stroke-width="2.2"/>
<!-- shoulders / body -->
<path d="M557 506.2 C554 506.3, 551 507.5, 548 509.5 L524 522" stroke-width="1.5"/>
<path d="M524 522 L486 541.8 C479 545.5, 470 553, 463.9 560.3 L463 613.8 L806.4 613.8 L805.8 535.7 C795 526, 783 516, 774 509.7 C770 507.5, 766 507, 763.9 506.8 C760 505, 758 503, 755 501.5 C740 494, 725 485, 710.3 476.4 C705 474, 700 472.5, 694.4 472" stroke-width="2.6"/>
<path d="M463.5 613.8 L806 613.8" stroke-width="3"/>
<path d="M557 506.2 L559.5 505.8" stroke-width="1"/>
</g>
<!-- eyebrows -->
<path d="M497.7 302.8 C499 298, 503 290, 507 286.4 C510 284.5, 515 284.2, 520 284 C526 283.5, 530 283, 534 283 C537 283, 538.3 285, 538.2 288 C538 291, 537 293.3, 534.4 293 C530 292.3, 524 291.8, 516.9 292.4 C511 293.5, 506 296, 501.6 298.5 C499.5 300, 498.5 301.5, 497.7 302.8 Z" fill="#16252b"/>
<path d="M566.1 281 C570 279.5, 578 278, 588 277.7 C596 277.8, 602 279.5, 609.9 283.5 C615 286, 620 289.5, 624.7 293.5 C620 291.5, 617 289.5, 612 288 C606 286, 600 284.6, 593.5 284.4 C587 284.5, 582 285.5, 577 287.5 C573.5 289, 571 290, 568.5 290 C566 289.5, 565.5 287.5, 565.5 285.3 C565.5 283, 565.7 281.7, 566.1 281 Z" fill="#16252b"/>
<!-- left eye -->
<path d="M505.4 315 C508 311, 512 308, 518 306.5 C524 305.6, 529 306.5, 533 308.5 C536 310, 539 312, 541 315 C541.5 317, 540.5 318, 538 318.7 C533 319.8, 527 320.6, 520 321.3 C514 321.6, 509 320.5, 506 318.3 C505 317, 505 316, 505.4 315 Z" fill="#fff" stroke="#000" stroke-width="1.1"/>
<path d="M506.5 315.3 C510 312.8, 516 311, 522 310.8 C528 310.8, 534 312.8, 540.5 316.5" fill="none" stroke="#000" stroke-width="1.9"/>
<path d="M505.8 315 L509.5 313.3 L511 318.5 L507 318.7 Z" fill="#000"/>
<circle cx="523.2" cy="315.5" r="6" fill="#28262b"/>
<!-- right eye -->
<path d="M573.3 311.5 C577 307, 583 303, 591.3 300.8 C598 300.5, 604 301.5, 609 304 C612 306, 613.5 308, 614 310" fill="none" stroke="#000" stroke-width="1.1"/>
<path d="M573.5 312.5 C578 308.5, 585 306, 593 305.5 C600 305.8, 605 307.5, 610.5 311 C609 313, 606 315, 602 315.8 C596 317, 590 317.5, 583 316.5 C578.5 315.5, 575.5 314.5, 573.5 312.5 Z" fill="#fff" stroke="#000" stroke-width="1.2"/>
<path d="M574 312.3 C578.5 308.8, 585 306.3, 593 305.8 C600 306, 605 307.8, 610.5 311" fill="none" stroke="#000" stroke-width="1.8"/>
<path d="M600 307 C604 308, 607.5 309.5, 610.5 311 C609 312.8, 607 314, 604.5 314.5 Z" fill="#000"/>
<circle cx="591.9" cy="311.6" r="6" fill="#28262b"/>
<!-- nose -->
<path d="M530.4 346.8 C529.3 350, 529.2 354, 530.5 356.5 C532 358.5, 535 359.5, 537.7 359.5 C535 358.3, 532.5 356.5, 531.6 354 C531 351.5, 530.8 349, 530.4 346.8 Z" fill="#000" stroke="#000" stroke-width="0.5"/>
<path d="M576.6 344 C577.8 347, 578.3 351, 577.3 353.5 C576 356, 573 357, 569.4 357.2 C572 356, 574.5 354.5, 575.8 352.5 C576.8 350, 576.8 347, 576.6 344 Z" fill="#000" stroke="#000" stroke-width="0.5"/>
<!-- mouth -->
<path d="M528.6 391.6 C531 391.5, 533.5 390.8, 535 389.5 C537 387.5, 539 385.5, 542.2 384.4 C544.5 384.2, 546.5 384.8, 548.5 385.8" fill="none" stroke="#6b1a12" stroke-width="1.9" stroke-linecap="round"/>
<path d="M554 385.3 C557 384.8, 560 383.8, 564 383.5 C569 383.3, 573 383.8, 576.6 384.4 C580 385, 584 385.3, 587.5 385.5" fill="none" stroke="#6b1a12" stroke-width="1.7" stroke-linecap="round"/>

<!-- HAIR -->
<path d="M485.8 271 C488 262, 497 246, 504 237 C508 230, 512 224, 515 222 C520 220, 524 220, 528 218 C535 213, 540 210, 547 208 C556 206, 566 206.5, 574 206.5 C582 206, 588 206.5, 593 208 C598 210, 604 214, 609 218.5 C612 219, 616 218, 619 218.3 C624 220, 630 226, 638 234.5 C642 239, 645 245, 648 248.5 C651 249, 654 249, 655 250 C658 255, 658 266, 659 272.6 C661 279, 664 284, 665 290 C666 300, 663 308, 661 312.5 C658 318, 655 322, 652.6 325.2 C649 330, 645 334, 642.6 335.2 C640 335, 639 333, 639 331 C639.5 322, 642 315, 642.6 309 C642 300, 641 294, 639.9 290.7 C637 284, 634 279, 632.6 276.2 C628 268, 626 262, 623.6 258 C620 250, 618 246, 616 244.3 C614.5 241.5, 612.5 238.5, 611 238.5 C611.5 244, 613.5 250, 613.7 254.8 C613.8 257, 613 258.5, 611.9 258.3 C610 258, 608.8 256.5, 607.8 254.8 C605.5 250, 603.5 245, 602 240.8 C600 236, 598 231, 595 227.6 C591 225, 588 223.5, 586 224 C580 226, 575 228.5, 570.3 228.4 C565 228, 560 225, 556 224.5 C552 225, 548 228.5, 544.4 229 C540 229, 537 226, 534 226.6 C528 228, 522 234, 518.5 239.6 C514 245, 511 251, 508 255 C506 256.5, 504.5 255, 504.5 252 C501 258, 499 266, 497.5 275 C496 290, 495.5 305, 495 318 L493 318 C490.5 300, 487.5 285, 485.8 271 Z" fill="#28262b" stroke="#000" stroke-width="2.6" stroke-linejoin="round"/>
<g fill="none" stroke="#000" stroke-linecap="round">
<path d="M521 221 C516 228, 510 238, 504.5 251" stroke-width="1.8"/>
<path d="M549.6 210.5 C540 215, 530 220, 522.7 225" stroke-width="1.6"/>
<path d="M574.2 210.5 C579 213, 583 216, 586.9 224" stroke-width="2.2"/>
<path d="M601 213 C606 218, 610 224, 613 236"  stroke-width="1.6"/>
<path d="M609 221 C614 227, 620 234, 626 242 C631 249, 635 255, 637 262 C639 268, 641 276, 642.5 286" stroke-width="2.2"/>
<path d="M647 249 C648 260, 649.5 270, 649.9 281.7 C651 292, 653 300, 652.6 308.9 C652 316, 650 322, 647 328" stroke-width="1.8"/>
</g>
</svg>

</body></html>
